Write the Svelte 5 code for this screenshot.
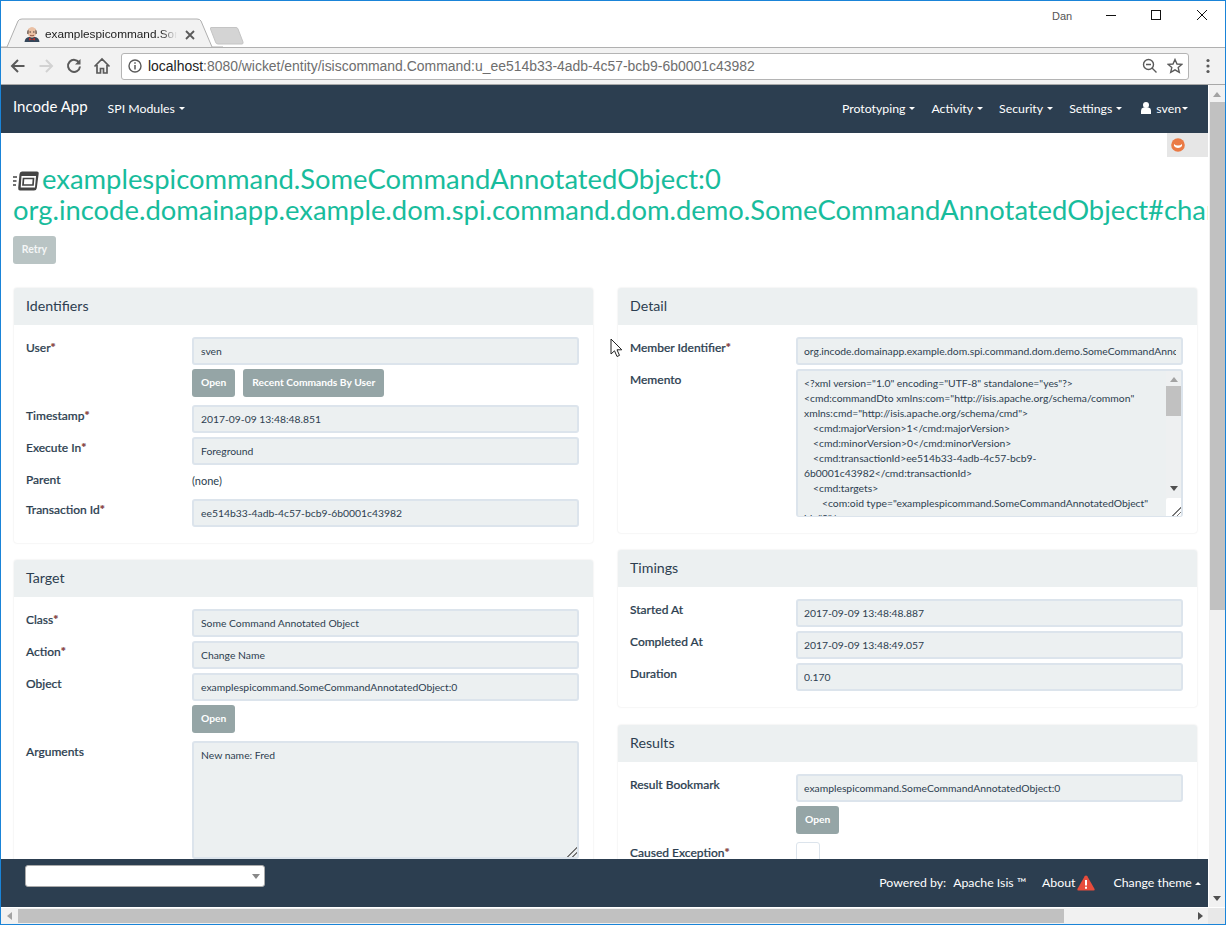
<script>
  const menus = ['Prototyping', 'Activity', 'Security', 'Settings'];

  const leftPanels = [
    {
      title: 'Identifiers',
      fields: [
        { label: 'User', req: true, value: 'sven', buttons: ['Open', 'Recent Commands By User'] },
        { label: 'Timestamp', req: true, value: '2017-09-09 13:48:48.851' },
        { label: 'Execute In', req: true, value: 'Foreground' },
        { label: 'Parent', plain: '(none)' },
        { label: 'Transaction Id', req: true, value: 'ee514b33-4adb-4c57-bcb9-6b0001c43982' }
      ]
    },
    {
      title: 'Target',
      fields: [
        { label: 'Class', req: true, value: 'Some Command Annotated Object' },
        { label: 'Action', req: true, value: 'Change Name' },
        { label: 'Object', value: 'examplespicommand.SomeCommandAnnotatedObject:0', buttons: ['Open'] },
        { label: 'Arguments', area: 'New name: Fred' }
      ]
    }
  ];

  const timings = [
    { label: 'Started At', value: '2017-09-09 13:48:48.887' },
    { label: 'Completed At', value: '2017-09-09 13:48:49.057' },
    { label: 'Duration', value: '0.170' }
  ];

  // indent is the number of leading spaces in the xml source
  const memento = [
    { indent: 0, text: '<?xml version="1.0" encoding="UTF-8" standalone="yes"?>' },
    { indent: 0, text: '<cmd:commandDto xmlns:com="http://isis.apache.org/schema/common"' },
    { indent: 0, text: 'xmlns:cmd="http://isis.apache.org/schema/cmd">' },
    { indent: 4, text: '<cmd:majorVersion>1</cmd:majorVersion>' },
    { indent: 4, text: '<cmd:minorVersion>0</cmd:minorVersion>' },
    { indent: 4, text: '<cmd:transactionId>ee514b33-4adb-4c57-bcb9-' },
    { indent: 0, text: '6b0001c43982</cmd:transactionId>' },
    { indent: 4, text: '<cmd:targets>' },
    { indent: 8, text: '<com:oid type="examplespicommand.SomeCommandAnnotatedObject"' },
    { indent: 0, text: 'id="0"/>' }
  ];
</script>

{#snippet field(f)}
  <div class="field">
    <div class="label">{f.label}{#if f.req}<span class="req">*</span>{/if}</div>
    <div class="control">
      {#if f.plain}
        <div class="plain">{f.plain}</div>
      {:else if f.area}
        <div class="textarea args">{f.area}<span class="grip"></span></div>
      {:else}
        <div class="input"><span class="clip">{f.value}</span></div>
      {/if}
      {#if f.buttons}
        <div class="btns">
          {#each f.buttons as b}<span class="btn">{b}</span>{/each}
        </div>
      {/if}
    </div>
  </div>
{/snippet}

<div class="window">
  <div class="tabstrip">
    <svg class="tabshape" width="222" height="32" viewBox="0 0 222 32">
      <path d="M0 31 H6 L17 5 Q18 3 21 3 H196 Q199 3 200 5 L211 31 H222" fill="#f2f2f2" stroke="#b0b0b0" />
    </svg>
    <svg class="favicon" width="16" height="16" viewBox="0 0 16 16">
      <path d="M0.5 16 Q1 11.5 5 11 H11 Q15 11.5 15.5 16Z" fill="#34465a" />
      <path d="M5 11.5 L8 13.5 L11 11.5 L11 14.5 L8 13.5 L5 14.5Z" fill="#b8302c" />
      <ellipse cx="8" cy="6.3" rx="4.6" ry="5.4" fill="#eac0a4" />
      <path d="M3.2 8 Q2.6 4.5 4.5 3.5 Q5 5 4.6 8Z M12.8 8 Q13.4 4.5 11.5 3.5 Q11 5 11.4 8Z" fill="#7a6a62" />
      <path d="M5.5 6 H7 M9 6 H10.5" stroke="#4a3a34" stroke-width="1" />
      <path d="M6 9.3 Q8 10.2 10 9.3" fill="none" stroke="#8a5040" stroke-width="0.9" />
    </svg>
    <span class="tabtitle">examplespicommand.SomeCommand</span>
    <svg class="tabclose" width="10" height="10" viewBox="0 0 10 10">
      <path d="M1 1 L9 9 M9 1 L1 9" stroke="#5a5a5a" stroke-width="1.8" />
    </svg>
    <svg class="newtab" width="36" height="20" viewBox="0 0 36 20">
      <path d="M1 1.5 H26 Q27.5 1.5 28 3 L33 16 Q33.5 18 32 18 H8 Q6 18 5.5 16 L0.5 3 Q0 1.5 1 1.5Z" fill="#d4d4d4" stroke="#c4c4c4" />
    </svg>
    <span class="winuser">Dan</span>
    <svg class="winbtns" width="150" height="16" viewBox="0 0 150 16">
      <path d="M0 6.5 H10" stroke="#111" />
      <rect x="45.5" y="1.5" width="9" height="9" fill="none" stroke="#111" />
      <path d="M91 1 L101 11 M101 1 L91 11" stroke="#111" />
    </svg>
  </div>

  <div class="toolbar">
    <svg class="navbtn" width="18" height="18" viewBox="0 0 18 18">
      <path d="M15.5 9 H3 M9 3 L3 9 L9 15" fill="none" stroke="#5a5a5a" stroke-width="2" />
    </svg>
    <svg class="navbtn" width="18" height="18" viewBox="0 0 18 18">
      <path d="M2.5 9 H15 M9 3 L15 9 L9 15" fill="none" stroke="#d2d2d2" stroke-width="2" />
    </svg>
    <svg class="navbtn" width="18" height="18" viewBox="0 0 18 18">
      <path d="M14.3 6 A6 6 0 1 0 15 9.5" fill="none" stroke="#5a5a5a" stroke-width="2" />
      <path d="M15.5 2 V7.5 H10Z" fill="#5a5a5a" />
    </svg>
    <svg class="navbtn" width="18" height="18" viewBox="0 0 18 18">
      <path d="M1.5 9.5 L9 2 L16.5 9.5 M4 8 V16 H7.5 V11.5 H10.5 V16 H14 V8" fill="none" stroke="#5a5a5a" stroke-width="1.7" />
    </svg>
    <div class="omnibox">
      <svg width="14" height="14" viewBox="0 0 14 14">
        <circle cx="7" cy="7" r="6" fill="none" stroke="#5a5a5a" stroke-width="1.4" />
        <path d="M7 6 V10.5 M7 3.2 V4.8" stroke="#5a5a5a" stroke-width="1.5" />
      </svg>
      <span class="url"><b>localhost</b>:8080/wicket/entity/isiscommand.Command:u_ee514b33-4adb-4c57-bcb9-6b0001c43982</span>
      <svg width="16" height="16" viewBox="0 0 16 16">
        <circle cx="6.5" cy="6.5" r="5" fill="none" stroke="#5a5a5a" stroke-width="1.4" />
        <path d="M4 6.5 H9 M10 10 L14.5 14.5" stroke="#5a5a5a" stroke-width="1.4" />
      </svg>
      <svg class="star" width="16" height="16" viewBox="0 0 16 16">
        <path d="M8 1.5 L10 6 L14.8 6.4 L11.2 9.6 L12.3 14.4 L8 11.9 L3.7 14.4 L4.8 9.6 L1.2 6.4 L6 6Z" fill="none" stroke="#5a5a5a" stroke-width="1.4" />
      </svg>
    </div>
    <svg class="kebab" width="4" height="16" viewBox="0 0 4 16">
      <circle cx="2" cy="2.5" r="1.6" fill="#5a5a5a" />
      <circle cx="2" cy="8" r="1.6" fill="#5a5a5a" />
      <circle cx="2" cy="13.5" r="1.6" fill="#5a5a5a" />
    </svg>
  </div>

  <div class="viewport">
    <div class="pagecol">
      <nav class="navbar">
        <span class="brand">Incode App</span>
        <span class="navitem spi">SPI Modules <i class="caret"></i></span>
        <span class="spacer"></span>
        {#each menus as m}
          <span class="navitem">{m} <i class="caret"></i></span>
        {/each}
        <span class="navitem user">
          <svg width="10" height="12" viewBox="0 0 10 12">
            <circle cx="5" cy="3" r="3" fill="#fff" />
            <path d="M0 12 V8.5 Q0 6 2.5 5.5 H7.5 Q10 6 10 8.5 V12Z" fill="#fff" />
          </svg>
          sven<i class="caret tight"></i>
        </span>
      </nav>

      <div class="page">
        <div class="debug">
          <svg width="14" height="14" viewBox="0 0 14 14">
            <circle cx="7" cy="7" r="6.8" fill="#ea7a45" />
            <path d="M3 6 Q4.5 7.5 7 7.5 Q9.5 7.5 11 6 V8 Q9.5 10 7 10 Q4.5 10 3 8Z" fill="#fff" />
          </svg>
        </div>

        <h1 class="title">
          <svg class="objicon" width="26" height="20" viewBox="0 0 26 20">
            <path d="M9 0.5 H24 Q26 0.5 25.7 2.5 L23.8 17 Q23.5 19.5 21 19.5 H7 Q5 19.5 5.2 17 L6.5 3 Q6.8 0.5 9 0.5Z" fill="#444" />
            <path d="M8.5 5 H23 L22 16.5 H7.7Z" fill="#fff" />
            <path d="M10.5 7.5 H20.5 L20 14 H10Z" fill="none" stroke="#444" stroke-width="1.7" />
            <path d="M0 6 H4 M0 10 H3.5 M0 14 H3" stroke="#444" stroke-width="1.6" />
          </svg>examplespicommand.SomeCommandAnnotatedObject:0<br />org.incode.domainapp.example.dom.spi.command.dom.demo.SomeCommandAnnotatedObject#changeName()
        </h1>
        <div class="retry">Retry</div>

        <div class="columns">
          <div class="col">
            {#each leftPanels as p}
              <section class="panel">
                <header>{p.title}</header>
                <div class="body">
                  {#each p.fields as f}
                    {@render field(f)}
                  {/each}
                </div>
              </section>
            {/each}
          </div>

          <div class="col right">
            <section class="panel">
              <header>Detail</header>
              <div class="body">
                {@render field({ label: 'Member Identifier', req: true, value: 'org.incode.domainapp.example.dom.spi.command.dom.demo.SomeCommandAnnotatedObject#changeName()' })}
                <div class="field">
                  <div class="label">Memento</div>
                  <div class="control">
                    <div class="textarea memento">
                      <div class="xml">
                        {#each memento as line}<div class="xmlline" style="padding-left: {line.indent * 2.25}px">{line.text}</div>{/each}
                      </div>
                      <div class="mscroll">
                        <i class="arrow up"></i>
                        <i class="mthumb"></i>
                        <i class="arrow down"></i>
                      </div>
                      <span class="grip boxed"></span>
                    </div>
                  </div>
                </div>
              </div>
            </section>

            <section class="panel">
              <header>Timings</header>
              <div class="body">
                {#each timings as f}
                  {@render field(f)}
                {/each}
              </div>
            </section>

            <section class="panel results">
              <header>Results</header>
              <div class="body">
                {@render field({ label: 'Result Bookmark', value: 'examplespicommand.SomeCommandAnnotatedObject:0', buttons: ['Open'] })}
                <div class="field">
                  <div class="label">Caused Exception<span class="req">*</span></div>
                  <div class="control"><div class="check"></div></div>
                </div>
              </div>
            </section>
          </div>
        </div>

        <svg class="cursor" width="14" height="20" viewBox="0 0 14 20">
          <path d="M1 1 V16 L4.5 12.8 L7 18.5 L9.5 17.4 L7 11.8 H11.8Z" fill="#fff" stroke="#222" />
        </svg>
      </div>

      <footer class="footer">
        <div class="select"><i class="selarrow"></i></div>
        <span class="spacer"></span>
        <span class="ftext">Powered by:</span>
        <span class="ftext isis">Apache Isis ™</span>
        <span class="ftext about">About</span>
        <svg class="warn" width="18" height="16" viewBox="0 0 18 16">
          <path d="M9 0.5 Q9.8 0.5 10.3 1.3 L17.6 14 Q18 15.5 16.6 15.5 H1.4 Q0 15.5 0.4 14 L7.7 1.3 Q8.2 0.5 9 0.5Z" fill="#e74c3c" />
          <path d="M9 5 V10.5 M9 11.8 V13.8" stroke="#fff" stroke-width="2" />
        </svg>
        <span class="ftext theme">Change theme <i class="caret up"></i></span>
      </footer>
    </div>

    <div class="vscroll">
      <i class="arrow up"></i>
      <i class="vthumb"></i>
      <i class="arrow down"></i>
    </div>
  </div>

  <div class="hscroll">
    <i class="arrow left"></i>
    <i class="hthumb"></i>
    <i class="arrow right"></i>
    <i class="corner"></i>
  </div>
</div>

<style>
  :global(body) {
    margin: 0;
    overflow: hidden;
  }

  .window {
    width: 1226px;
    height: 925px;
    box-sizing: border-box;
    border: 1px solid #1a84d8;
    display: flex;
    flex-direction: column;
    overflow: hidden;
    font-family: Lato, "Liberation Sans", sans-serif;
    background: #fff;
  }

  /* browser chrome */
  .tabstrip {
    height: 47px;
    flex: none;
    position: relative;
    background: #fff;
    border-bottom: 1px solid #b0b0b0;
    box-sizing: border-box;
  }

  .tabshape {
    position: absolute;
    left: 0;
    top: 15px;
  }

  .favicon {
    position: absolute;
    left: 23px;
    top: 25px;
  }

  .tabtitle {
    position: absolute;
    left: 44px;
    top: 25px;
    width: 132px;
    overflow: hidden;
    white-space: nowrap;
    font: 11.8px/16px "Liberation Sans", sans-serif;
    color: #222;
    -webkit-mask-image: linear-gradient(90deg, #000 88%, transparent);
    mask-image: linear-gradient(90deg, #000 88%, transparent);
  }

  .tabclose {
    position: absolute;
    left: 184px;
    top: 29px;
  }

  .newtab {
    position: absolute;
    left: 209px;
    top: 25px;
  }

  .winuser {
    position: absolute;
    left: 1051px;
    top: 8px;
    font: 11px/14px "Liberation Sans", sans-serif;
    color: #555;
  }

  .winbtns {
    position: absolute;
    left: 1105px;
    top: 8px;
  }

  .toolbar {
    height: 37px;
    flex: none;
    display: flex;
    align-items: center;
    box-sizing: border-box;
    padding: 0 0 0 8px;
    gap: 10px;
    background: #f2f2f2;
    border-bottom: 1px solid #a8a8a8;
  }

  .navbtn {
    flex: none;
  }

  .omnibox {
    width: 1068px;
    height: 27px;
    box-sizing: border-box;
    border: 1px solid #b4b4b4;
    border-radius: 3px;
    background: #fff;
    display: flex;
    align-items: center;
    gap: 6px;
    padding: 0 5px 0 6px;
  }

  .url {
    flex: 1;
    font: 13.95px/18px "Liberation Sans", sans-serif;
    color: #6e6e6e;
    white-space: nowrap;
  }

  .url b {
    font-weight: normal;
    color: #222;
  }

  .star {
    margin-left: 3px;
  }

  .kebab {
    margin-left: 7px;
  }

  /* page */
  .viewport {
    flex: 1;
    min-height: 0;
    display: flex;
  }

  .pagecol {
    width: 1207px;
    display: flex;
    flex-direction: column;
    min-height: 0;
  }

  .navbar {
    height: 48px;
    flex: none;
    box-sizing: border-box;
    background: #2c3e50;
    display: flex;
    align-items: center;
    padding: 0 20px 2px 12px;
    color: #fff;
    font-size: 12.3px;
  }

  .brand {
    font-size: 15px;
    margin-right: 20px;
    position: relative;
    top: -2px;
  }

  .navitem {
    margin-left: 16px;
    white-space: nowrap;
    display: flex;
    align-items: center;
    gap: 4px;
  }

  .navitem.spi {
    margin-left: 0;
  }

  .user {
    margin-left: 19px;
    gap: 5px;
  }

  .spacer {
    flex: 1;
  }

  .caret {
    display: inline-block;
    width: 0;
    height: 0;
    border: 3px solid transparent;
    border-top-color: #fff;
    border-bottom: 0;
    margin-top: 1px;
  }

  .caret.tight {
    margin-left: -4px;
  }

  .caret.up {
    border-top: 0;
    border-bottom: 3px solid #fff;
    vertical-align: 2px;
  }

  .page {
    flex: 1;
    min-height: 0;
    overflow: hidden;
    position: relative;
    padding: 0 0 0 12px;
  }

  .debug {
    position: absolute;
    right: 0;
    top: 0;
    width: 41px;
    height: 24px;
    background: #e6e6e6;
    display: flex;
    align-items: center;
    padding-left: 4px;
    box-sizing: border-box;
  }

  .title {
    margin: 30px 0 0;
    font-size: 27.4px;
    line-height: 31px;
    font-weight: 400;
    color: #18bc9c;
    white-space: nowrap;
  }

  .objicon {
    vertical-align: -2px;
    margin-right: 3px;
  }

  .retry {
    display: inline-block;
    margin-top: 11px;
    width: 43px;
    height: 28px;
    line-height: 27px;
    text-align: center;
    border-radius: 3px;
    background: #b9c4c4;
    color: #f4f6f6;
    font-size: 10.5px;
    font-weight: 700;
  }

  .columns {
    display: flex;
    gap: 25px;
    margin-top: 24px;
    padding-left: 1px;
    width: 1183px;
  }

  .col {
    width: 579px;
    flex: none;
    display: flex;
    flex-direction: column;
    gap: 17px;
  }

  .panel {
    background: #fff;
    border-radius: 3px;
    box-shadow: 0 0 2px rgba(0, 0, 0, 0.13);
  }

  .results {
    margin-top: 1px;
  }

  .panel header {
    height: 37px;
    line-height: 36px;
    padding-left: 12px;
    background: #ecf0f1;
    color: #2c3e50;
    font-size: 14.2px;
    border-radius: 3px 3px 0 0;
  }

  .body {
    padding: 12px 14px 16px 12px;
    display: flex;
    flex-direction: column;
    gap: 4px;
  }

  .field {
    display: flex;
  }

  .label {
    width: 166px;
    flex: none;
    padding-top: 3px;
    color: #2c3e50;
    font-size: 12px;
    line-height: 15px;
    font-weight: 500;
    -webkit-text-stroke: 0.2px #2c3e50;
  }

  .req {
    color: #c0392b;
    font-weight: 700;
  }

  .control {
    width: 387px;
    flex: none;
    min-width: 0;
  }

  .input,
  .textarea {
    box-sizing: border-box;
    background: #ecf0f1;
    border: 2px solid #dce4ec;
    border-radius: 3px;
    color: #2c3e50;
    font-size: 10.35px;
  }

  .input {
    height: 28px;
    line-height: 25px;
    padding: 0 5px 0 7px;
    white-space: nowrap;
  }

  .right .input {
    padding-left: 6px;
  }

  .clip {
    display: block;
    overflow: hidden;
  }

  .plain {
    height: 26px;
    line-height: 24px;
    font-size: 11px;
    color: #2c3e50;
  }

  .btns {
    display: flex;
    gap: 8px;
    margin-top: 4px;
    margin-bottom: 4px;
  }

  .btn {
    height: 28px;
    line-height: 27px;
    padding: 0 9px;
    border-radius: 3px;
    background: #95a5a6;
    color: #fff;
    font-size: 10.25px;
    font-weight: 700;
  }

  .textarea {
    position: relative;
    overflow: hidden;
  }

  .args {
    height: 118px;
    padding: 4px 7px;
    line-height: 16px;
  }

  .memento {
    height: 148px;
    display: flex;
    border-bottom-width: 1px;
  }

  .xml {
    flex: 1;
    min-width: 0;
    padding: 5px 6px;
    font-size: 10.35px;
    line-height: 15px;
  }

  .mscroll {
    width: 15px;
    flex: none;
    background: #eef0f1;
    display: flex;
    flex-direction: column;
    align-items: center;
    padding-top: 6px;
  }

  .mthumb {
    display: block;
    flex: none;
    width: 100%;
    height: 30px;
    margin-top: 4px;
    background: #c1c1c1;
  }

  .mscroll .down {
    margin-top: 70px;
  }

  .grip {
    position: absolute;
    right: 0;
    bottom: 0;
    width: 12px;
    height: 12px;
    background: linear-gradient(135deg, transparent 58%, #777 58%, #777 65%, transparent 65%, transparent 78%, #777 78%, #777 85%, transparent 85%);
  }

  .grip.boxed {
    width: 15px;
    height: 18px;
    background: linear-gradient(135deg, transparent 58%, #777 58%, #777 65%, transparent 65%, transparent 78%, #777 78%, #777 85%, transparent 85%) right bottom / 11px 11px no-repeat, #fff;
    border-radius: 2px 0 0 0;
  }

  .check {
    width: 24px;
    height: 24px;
    box-sizing: border-box;
    border: 1px solid #dce4ec;
    border-radius: 3px;
    background: #fff;
  }

  .cursor {
    position: absolute;
    left: 609px;
    top: 205px;
  }

  /* footer */
  .footer {
    height: 48px;
    flex: none;
    box-sizing: border-box;
    background: #2c3e50;
    display: flex;
    align-items: center;
    padding: 0 7px 1px 24px;
    color: #fff;
    font-size: 12.3px;
    position: relative;
    z-index: 1;
  }

  .select {
    width: 240px;
    height: 22px;
    margin-top: -13px;
    box-sizing: border-box;
    background: #fff;
    border: 1px solid #aaa;
    border-radius: 3px;
    position: relative;
  }

  .selarrow {
    position: absolute;
    right: 4px;
    top: 8px;
    border: 4px solid transparent;
    border-top: 5px solid #888;
    border-bottom: 0;
  }

  .ftext {
    white-space: nowrap;
  }

  .isis {
    margin-left: 7px;
  }

  .about {
    margin-left: 16px;
  }

  .warn {
    margin-left: 2px;
    margin-right: 18px;
  }

  /* scrollbars */
  .vscroll {
    width: 17px;
    flex: none;
    background: #f1f1f1;
    display: flex;
    flex-direction: column;
    align-items: center;
    padding-top: 7px;
    box-sizing: border-box;
    border-left: 1px solid #fff;
  }

  .vthumb {
    flex: none;
    width: 15px;
    height: 508px;
    margin-top: 5px;
    background: #c1c1c1;
  }

  .vscroll .down {
    margin-top: auto;
    margin-bottom: 6px;
  }

  .arrow {
    display: block;
    width: 0;
    height: 0;
    flex: none;
    border: 4px solid transparent;
  }

  .arrow.up {
    border-top: 0;
    border-bottom: 5px solid #a3a3a3;
  }

  .arrow.down {
    border-bottom: 0;
    border-top: 5px solid #505050;
  }

  .arrow.left {
    border-left: 0;
    border-right: 5px solid #a3a3a3;
  }

  .arrow.right {
    border-right: 0;
    border-left: 5px solid #505050;
  }

  .hscroll {
    height: 17px;
    flex: none;
    background: #f1f1f1;
    display: flex;
    align-items: center;
    padding-left: 6px;
    border-top: 1px solid #fff;
    box-sizing: border-box;
  }

  .hthumb {
    width: 1046px;
    height: 14px;
    margin-left: 6px;
    background: #c1c1c1;
  }

  .hscroll .right {
    margin-left: 134px;
  }

  .corner {
    width: 17px;
    height: 16px;
    margin-left: auto;
    background: #e8e8e8;
  }
</style>
